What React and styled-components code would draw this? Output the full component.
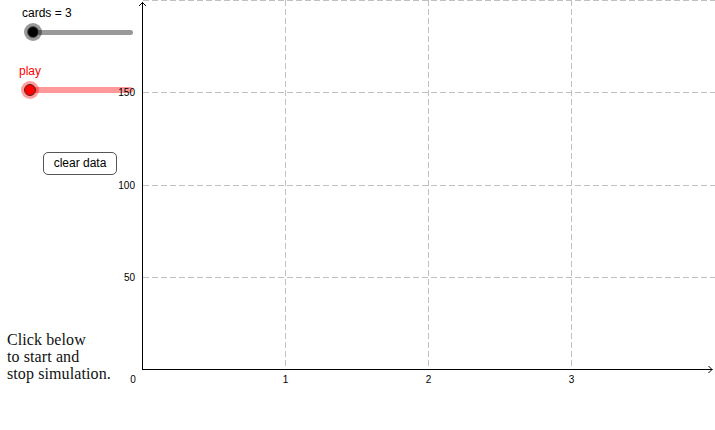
import styled, { createGlobalStyle } from 'styled-components'

const GlobalStyle = createGlobalStyle`
  body {
    margin: 0;
    background: #fff;
    font-family: "Liberation Sans", Arial, sans-serif;
  }
`

const yTicks = [
  { v: 150, y: 92 },
  { v: 100, y: 185 },
  { v: 50, y: 277 },
]
const xTicks = [
  { v: 1, x: 285 },
  { v: 2, x: 428 },
  { v: 3, x: 571 },
]

const Chart = () => (
  <ChartSvg width="715" height="430" viewBox="0 0 715 430">
    <g stroke="#c0c0c0" strokeWidth="1" strokeDasharray="6 3" fill="none">
      <line x1="143" y1="0.5" x2="715" y2="0.5" />
      {yTicks.map((t) => (
        <line key={t.v} x1="143" y1={t.y + 0.5} x2="715" y2={t.y + 0.5} />
      ))}
      {xTicks.map((t) => (
        <line key={t.v} x1={t.x + 0.5} y1="0" x2={t.x + 0.5} y2="369" />
      ))}
    </g>
    <g stroke="#000" strokeWidth="1" fill="none">
      <line x1="142.5" y1="2" x2="142.5" y2="369.5" />
      <line x1="142" y1="369.5" x2="712.5" y2="369.5" />
      <polyline points="139,6 142.5,2.5 146,6" />
      <polyline points="708.5,366 712,369.5 708.5,373" />
    </g>
    <g fontFamily="'Liberation Sans', Arial, sans-serif" fontSize="10" fill="#000">
      {yTicks.map((t) => (
        <text key={t.v} x="135" y={t.y + 4} textAnchor="end">
          {t.v}
        </text>
      ))}
      <text x="133" y="383" textAnchor="middle">0</text>
      {xTicks.map((t) => (
        <text key={t.v} x={t.x + 0.5} y="383" textAnchor="middle">
          {t.v}
        </text>
      ))}
    </g>
  </ChartSvg>
)

const Slider = ({ label, color, indent, offset, width, track, thickness, knob, halo, edge }) => (
  <SliderBlock>
    <SliderLabel $color={color} $indent={indent}>{label}</SliderLabel>
    <SliderRow>
      <Track $offset={offset} $width={width} $color={track} $thickness={thickness}>
        <Knob $color={knob} $halo={halo} $edge={edge} />
      </Track>
    </SliderRow>
  </SliderBlock>
)

const App = () => {
  return (
    <>
      <GlobalStyle />
      <Stage>
        <Panel>
          <Slider
            label="cards = 3"
            color="#000"
            indent={22}
            offset={33}
            width={100}
            track="#999999"
            thickness={5}
            knob="#000"
            halo="rgba(0, 0, 0, 0.4)"
            edge="#555"
          />
          <PlaySpacer />
          <Slider
            label="play"
            color="#ff0000"
            indent={19}
            offset={30}
            width={103}
            track="#ff9999"
            thickness={6}
            knob="#ff0000"
            halo="rgba(255, 0, 0, 0.38)"
            edge="#552222"
          />
          <ClearButton>clear data</ClearButton>
          <Hint>
            Click below
            <br />
            to start and
            <br />
            stop simulation.
          </Hint>
        </Panel>
        <Chart />
      </Stage>
    </>
  )
}

export default App

const Stage = styled.div`
  display: grid;
  width: 715px;
  height: 430px;
  overflow: hidden;

  & > * {
    grid-area: 1 / 1;
  }
`

const ChartSvg = styled.svg`
  display: block;
  position: relative;
  z-index: 1;
  pointer-events: none;
`

const Panel = styled.div`
  display: flex;
  flex-direction: column;
  align-items: flex-start;
  width: 142px;
  padding-top: 6px;
`

const SliderBlock = styled.div`
  display: flex;
  flex-direction: column;
  align-items: flex-start;
  width: 142px;
`

const SliderLabel = styled.div`
  font-size: 12px;
  line-height: 14px;
  color: ${(p) => p.$color};
  margin-left: ${(p) => p.$indent}px;
`

const SliderRow = styled.div`
  display: flex;
  align-items: center;
  height: 18px;
  width: 100%;
  margin-top: 3px;
`

const Track = styled.div`
  position: relative;
  margin-left: ${(p) => p.$offset}px;
  width: ${(p) => p.$width}px;
  height: ${(p) => p.$thickness}px;
  border-radius: ${(p) => p.$thickness / 2}px;
  background: ${(p) => p.$color};
`

const Knob = styled.div`
  position: absolute;
  left: -6px;
  top: 50%;
  width: 12px;
  height: 12px;
  margin-top: -6px;
  box-sizing: border-box;
  border-radius: 50%;
  background: ${(p) => p.$color};
  border: 1px solid ${(p) => p.$edge};
  box-shadow: 0 0 0 3px ${(p) => p.$halo};
`

const PlaySpacer = styled.div`
  height: 23px;
`

const ClearButton = styled.button`
  margin-top: 53px;
  margin-left: 43px;
  width: 74px;
  height: 23px;
  padding: 0;
  box-sizing: border-box;
  border: 1px solid #555;
  border-radius: 5px;
  background: #fff;
  color: #000;
  font-family: "Liberation Sans", Arial, sans-serif;
  font-size: 12px;
  line-height: 21px;
  cursor: pointer;
`

const Hint = styled.div`
  margin-top: 156px;
  margin-left: 7px;
  font-family: "Liberation Serif", "Times New Roman", serif;
  font-size: 16px;
  line-height: 17px;
  letter-spacing: 0.1px;
  color: #111;
`
